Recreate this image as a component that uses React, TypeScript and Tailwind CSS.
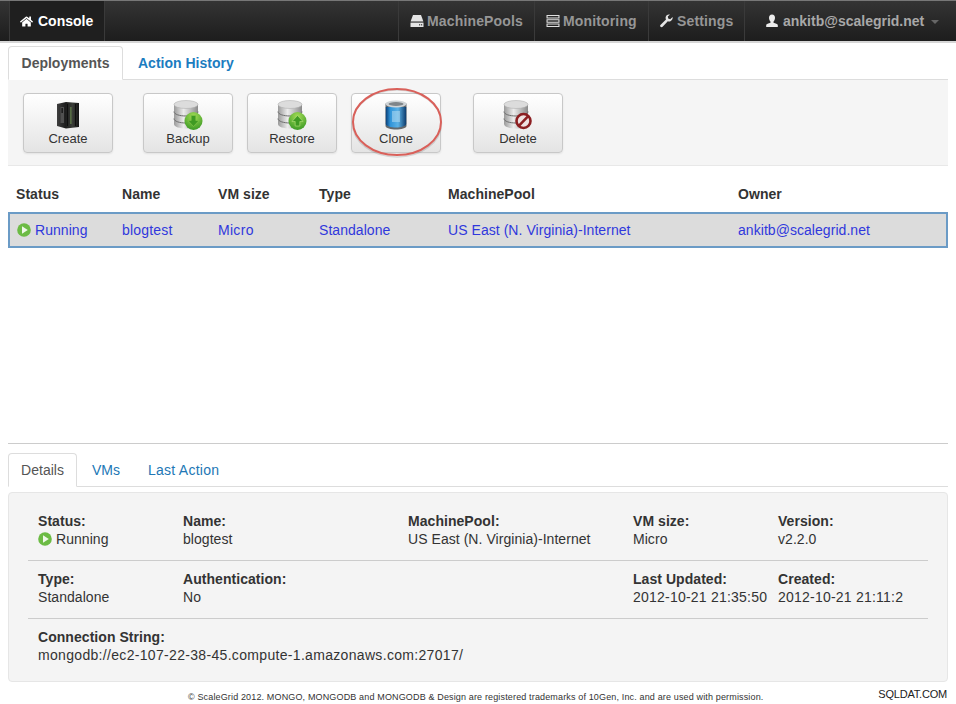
import { FaHome } from "react-icons/fa";

const font = "font-['Liberation_Sans',Arial,sans-serif]";

const PlayIcon = () => (
  <svg width="14" height="14" viewBox="0 0 14 14" className="shrink-0">
    <circle cx="7" cy="7" r="6.8" fill="#6cbb44" />
    <path d="M5 3.3 L10.8 7 L5 10.7 Z" fill="#f0f8ea" />
  </svg>
);

const HddIcon = () => (
  <svg width="14" height="14" viewBox="0 0 14 14" className="shrink-0">
    <path d="M3 1 H11 L13.4 7.6 H0.6 Z" fill="#e4e4e4" />
    <path d="M0.5 8.6 H13.5 V13 H0.5 Z" fill="#e4e4e4" />
    <rect x="9" y="10.2" width="1.2" height="1.2" fill="#333" />
    <rect x="11" y="10.2" width="1.2" height="1.2" fill="#333" />
  </svg>
);

const TasksIcon = () => (
  <svg width="14" height="14" viewBox="0 0 14 14" className="shrink-0">
    <path d="M0.5 1 H13.5 V4.4 H0.5 Z M1.6 2 V3.4 H12.4 V2 Z" fill="#e0e0e0" fillRule="evenodd" />
    <path d="M0.5 5.3 H13.5 V8.7 H0.5 Z M1.6 6.3 V7.7 H12.4 V6.3 Z" fill="#e0e0e0" fillRule="evenodd" />
    <path d="M0.5 9.6 H13.5 V13 H0.5 Z M1.6 10.6 V12 H12.4 V10.6 Z" fill="#e0e0e0" fillRule="evenodd" />
  </svg>
);

const WrenchIcon = () => (
  <svg width="13" height="14" viewBox="0 0 13 14" className="shrink-0">
    <path d="M12.6 3 L10.2 5.2 L8.2 4.6 L7.8 2.6 L10 0.6 C8 0 5.8 1.2 5.6 3.4 C5.5 4.2 5.7 5 6 5.5 L0.4 11 C-0.2 11.8 0.3 13.2 1.5 13.2 C1.9 13.2 2.3 13 2.6 12.7 L7.8 7.2 C8.6 7.5 9.6 7.6 10.4 7.2 C12 6.6 13 4.8 12.6 3 Z" fill="#e4e4e4" />
  </svg>
);

const UserIcon = () => (
  <svg width="12" height="14" viewBox="0 0 12 14" className="shrink-0">
    <path d="M6 0.5 C8 0.5 9 2 9 3.8 C9 5.6 8.2 7 7.5 7.6 V8.8 C9.5 9.4 11.6 10 11.8 11 V13 H0.2 V11 C0.4 10 2.5 9.4 4.5 8.8 V7.6 C3.8 7 3 5.6 3 3.8 C3 2 4 0.5 6 0.5 Z" fill="#ececec" />
  </svg>
);

const ServerIcon = () => (
  <svg width="24" height="28" viewBox="0 0 24 28">
    <defs>
      <linearGradient id="rack" x1="0" x2="1" y1="0" y2="0">
        <stop offset="0" stopColor="#3f3f3f" />
        <stop offset="0.4" stopColor="#1c1c1c" />
        <stop offset="0.7" stopColor="#3a3d38" />
        <stop offset="1" stopColor="#161616" />
      </linearGradient>
    </defs>
    <path d="M1 3 L10 1 L23 2 L23 26 L10 27.5 L1 25 Z" fill="url(#rack)" />
    <path d="M4.5 6 H8 V22 H4.5 Z" fill="#505050" />
    <path d="M5.5 7 H6.8 V12 H5.5 Z" fill="#111" />
    <path d="M14.4 6 H15.4 V23 H14.4 Z" fill="#6e9150" />
    <path d="M11 3 H12 V25 H11 Z" fill="#0e0e0e" />
    <path d="M19 3 H20 V25 H19 Z" fill="#0e0e0e" />
  </svg>
);

type Badge = "down" | "up" | "no";

const DatabaseIcon = ({ badge }: { badge: Badge }) => (
  <svg width="30" height="30" viewBox="0 0 30 30">
    <defs>
      <linearGradient id={"silver-" + badge} x1="0" x2="1" y1="0" y2="0">
        <stop offset="0" stopColor="#9a9a9a" />
        <stop offset="0.4" stopColor="#ececec" />
        <stop offset="1" stopColor="#8a8a8a" />
      </linearGradient>
      <radialGradient id={"badge-" + badge} cx="0.5" cy="0.25" r="0.85">
        <stop offset="0" stopColor="#a4dc55" />
        <stop offset="1" stopColor="#2f921f" />
      </radialGradient>
    </defs>
    <path d="M1 4.5 V24 C1 27 7 28.5 13 28.5 C19 28.5 25 27 25 24 V4.5 Z" fill={"url(#silver-" + badge + ")"} />
    <ellipse cx="13" cy="4.5" rx="12" ry="4" fill="#dcdcdc" stroke="#a8a8a8" strokeWidth="0.5" />
    <path d="M1 11.5 C1 14.5 7 16 13 16 C19 16 25 14.5 25 11.5" fill="none" stroke="#6e6e6e" strokeWidth="1" />
    <path d="M1 18.5 C1 21.5 7 23 13 23 C19 23 25 21.5 25 18.5" fill="none" stroke="#6e6e6e" strokeWidth="1" />
    {badge === "no" ? (
      <g>
        <circle cx="20.5" cy="21" r="7" fill="#efe2e2" stroke="#8c1f22" strokeWidth="2.6" />
        <path d="M15.8 25.8 L25.2 16.2" stroke="#8c1f22" strokeWidth="2.6" />
      </g>
    ) : (
      <g>
        <circle cx="20.5" cy="21" r="9" fill={"url(#badge-" + badge + ")"} />
        {badge === "down" ? (
          <path d="M18.2 15.5 H22.8 V20.5 H26 L20.5 26.5 L15 20.5 H18.2 Z" fill="#3f9a22" stroke="#86c94a" strokeWidth="0.6" />
        ) : (
          <path d="M20.5 15.5 L26 21.5 H22.8 V26 H18.2 V21.5 H15 Z" fill="#3f9a22" stroke="#b5e27c" strokeWidth="0.6" />
        )}
      </g>
    )}
  </svg>
);

const CloneIcon = () => (
  <svg width="22" height="30" viewBox="0 0 22 30">
    <defs>
      <linearGradient id="clone-blue" x1="0" x2="1" y1="0" y2="0">
        <stop offset="0" stopColor="#0a3f78" />
        <stop offset="0.22" stopColor="#2f93d8" />
        <stop offset="0.6" stopColor="#5cb2e6" />
        <stop offset="1" stopColor="#0b3a6c" />
      </linearGradient>
    </defs>
    <path d="M0.5 3.5 V26 C0.5 28 6 29.5 11 29.5 C16 29.5 21.5 28 21.5 26 V3.5 Z" fill="#63686c" />
    <path d="M0.8 7 V24 C0.8 26 6 27.5 11 27.5 C16 27.5 21.2 26 21.2 24 V7 Z" fill="url(#clone-blue)" />
    <path d="M7 11 H15 V22 H7 Z" fill="#bcdff3" opacity="0.5" />
    <ellipse cx="11" cy="4" rx="10.5" ry="3.4" fill="#ced3d6" />
    <ellipse cx="11" cy="4" rx="7.5" ry="1.9" fill="#7f8589" />
  </svg>
);

const ToolButton = ({ label, icon, className = "" }: { label: string; icon: React.ReactNode; className?: string }) => (
  <button className={"flex h-[60px] w-[90px] flex-col items-center rounded-[4px] border border-[#c8c8c8] bg-gradient-to-b from-white to-[#e4e4e4] pt-[6px] text-[13px] leading-[16px] text-[#333] shadow-[0_1px_2px_rgba(0,0,0,0.08)] " + className}>
    <span className="flex h-[30px] items-center justify-center">{icon}</span>
    <span className="mt-[1px]">{label}</span>
  </button>
);

const NavItem = ({ icon, label, className = "" }: { icon: React.ReactNode; label: string; className?: string }) => (
  <div className={"flex h-full items-center border-l border-[#3a3a3a] pl-[11px] text-[14px] font-bold tracking-[0.15px] text-[#969696] " + className}>
    {icon}
    <span>{label}</span>
  </div>
);

const Field = ({ label, children }: { label?: string; children?: React.ReactNode }) => (
  <div className="whitespace-nowrap text-[14px] leading-[18px] tracking-[0.05px] text-[#333]">
    {label && <div className="font-bold">{label}</div>}
    {children && <div className="flex items-center gap-[4px]">{children}</div>}
  </div>
);

const detailCols = "grid grid-cols-[145px_225px_225px_145px_1fr] pl-[10px]";
const tableCols = "grid grid-cols-[106px_96px_101px_129px_290px_1fr] text-[14px] tracking-[0.05px]";

export default function App() {
  return (
    <div className={"flex h-[704px] w-[956px] flex-col overflow-hidden bg-white " + font}>
      <nav className="flex h-[43px] shrink-0 items-stretch border-t border-b-2 border-t-[#777] border-b-[#d6d6d6] bg-gradient-to-b from-[#343434] to-[#1d1d1d] pl-[9px]">
        <div className="flex w-[96px] items-center gap-[5px] border-x border-[#3a3a3a] bg-[#1f1f1f] pl-[10px] text-[14px] font-bold text-white">
          <FaHome size={13} />
          <span>Console</span>
        </div>
        <div className="flex-1" />
        <NavItem icon={<HddIcon />} label="MachinePools" className="w-[136px] gap-[3px]" />
        <NavItem icon={<TasksIcon />} label="Monitoring" className="w-[114px] gap-[3px]" />
        <NavItem icon={<WrenchIcon />} label="Settings" className="w-[96px] gap-[4px]" />
        <div className="flex h-full w-[212px] items-center gap-[5px] border-l border-[#3a3a3a] pl-[21px] text-[14px] font-bold text-[#a8a8a8]">
          <UserIcon />
          <span>ankitb@scalegrid.net</span>
          <span className="ml-[2px] mt-[2px] border-x-[4px] border-t-[4px] border-x-transparent border-t-[#666]" />
        </div>
      </nav>

      <main className="flex flex-1 flex-col px-2">
        <div className="mt-[3px] flex h-[34px] items-stretch border-b border-[#ddd]">
          <div className="-mb-px flex w-[115px] items-center justify-center rounded-t-[4px] border border-[#ddd] border-b-white bg-white text-[14px] font-bold text-[#555]">
            Deployments
          </div>
          <div className="ml-[15px] flex items-center pt-[1px] text-[14px] font-bold text-[#1c7cc0]">Action History</div>
        </div>

        <div className="flex h-[86px] items-start border-b border-[#e8e8e8] bg-[#f5f5f5] pl-[15px] pt-[13px]">
          <ToolButton label="Create" icon={<ServerIcon />} />
          <ToolButton label="Backup" icon={<DatabaseIcon badge="down" />} className="ml-[30px]" />
          <ToolButton label="Restore" icon={<DatabaseIcon badge="up" />} className="ml-[14px]" />
          <div className="relative ml-[14px]">
            <ToolButton label="Clone" icon={<CloneIcon />} />
            <svg width="94" height="72" viewBox="0 0 94 72" className="absolute -left-[1px] -top-[6px]">
              <ellipse cx="47" cy="36.5" rx="44.5" ry="33.5" fill="none" stroke="#000" strokeOpacity="0.12" strokeWidth="1.5" />
              <ellipse cx="47" cy="35" rx="44" ry="33" fill="none" stroke="#d9605a" strokeWidth="2" />
            </svg>
          </div>
          <ToolButton label="Delete" icon={<DatabaseIcon badge="no" />} className="ml-[32px]" />
        </div>

        <div className={tableCols + " mt-[19px] h-[27px] items-start px-2 font-bold leading-[18px] text-[#333]"}>
          <div>Status</div>
          <div>Name</div>
          <div>VM size</div>
          <div>Type</div>
          <div>MachinePool</div>
          <div>Owner</div>
        </div>
        <div className={tableCols + " h-[36px] items-center border-2 border-[#6b9bc6] bg-[#dcdcdc] px-[6px] text-[#3038dc]"}>
          <div className="flex items-center gap-[4px]">
            <span className="ml-[1px]">
              <PlayIcon />
            </span>
            Running
          </div>
          <div className="tracking-[0.2px]">blogtest</div>
          <div className="tracking-[0.3px]">Micro</div>
          <div>Standalone</div>
          <div>US East (N. Virginia)-Internet</div>
          <div>ankitb@scalegrid.net</div>
        </div>

        <div className="mt-[195px] border-t border-[#ccc]" />

        <div className="mt-[9px] flex h-[34px] items-stretch border-b border-[#ddd] text-[14px] text-[#2277b5]">
          <div className="-mb-px flex w-[69px] items-center justify-center rounded-t-[4px] border border-[#ddd] border-b-white bg-white text-[#555]">
            Details
          </div>
          <div className="ml-[15px] flex items-center pt-[1px]">VMs</div>
          <div className="ml-[28px] flex items-center pt-[1px] tracking-[0.25px]">Last Action</div>
        </div>

        <section className="mt-[5px] h-[190px] rounded-[4px] border border-[#e6e6e6] bg-[#f4f4f4] px-[19px] pt-[19px]">
          <div className={detailCols + " h-[49px] border-b border-[#ccc]"}>
            <Field label="Status:">
              <PlayIcon />
              <span>Running</span>
            </Field>
            <Field label="Name:">blogtest</Field>
            <Field label="MachinePool:">US East (N. Virginia)-Internet</Field>
            <Field label="VM size:">Micro</Field>
            <Field label="Version:">v2.2.0</Field>
          </div>
          <div className={detailCols + " h-[58px] border-b border-[#ccc] pt-[9px]"}>
            <Field label="Type:">Standalone</Field>
            <Field label="Authentication:">No</Field>
            <Field />
            <Field label="Last Updated:">
              <span className="tracking-[0.22px]">2012-10-21 21:35:50</span>
            </Field>
            <Field label="Created:">
              <span className="tracking-[0.22px]">2012-10-21 21:11:2</span>
            </Field>
          </div>
          <div className="pl-[10px] pt-[9px]">
            <Field label="Connection String:">
              <span className="tracking-[0.32px]">mongodb://ec2-107-22-38-45.compute-1.amazonaws.com:27017/</span>
            </Field>
          </div>
        </section>

        <footer className="mt-[8px] flex items-center justify-between pl-[180px] pr-[1px]">
          <span className="text-[9px] leading-[14px] tracking-[0.15px] text-[#333]">
            © ScaleGrid 2012. MONGO, MONGODB and MONGODB &amp; Design are registered trademarks of 10Gen, Inc. and are used with permission.
          </span>
          <span className="-mt-[6px] text-[11px] tracking-[-0.2px] text-[#222]">SQLDAT.COM</span>
        </footer>
      </main>
    </div>
  );
}
